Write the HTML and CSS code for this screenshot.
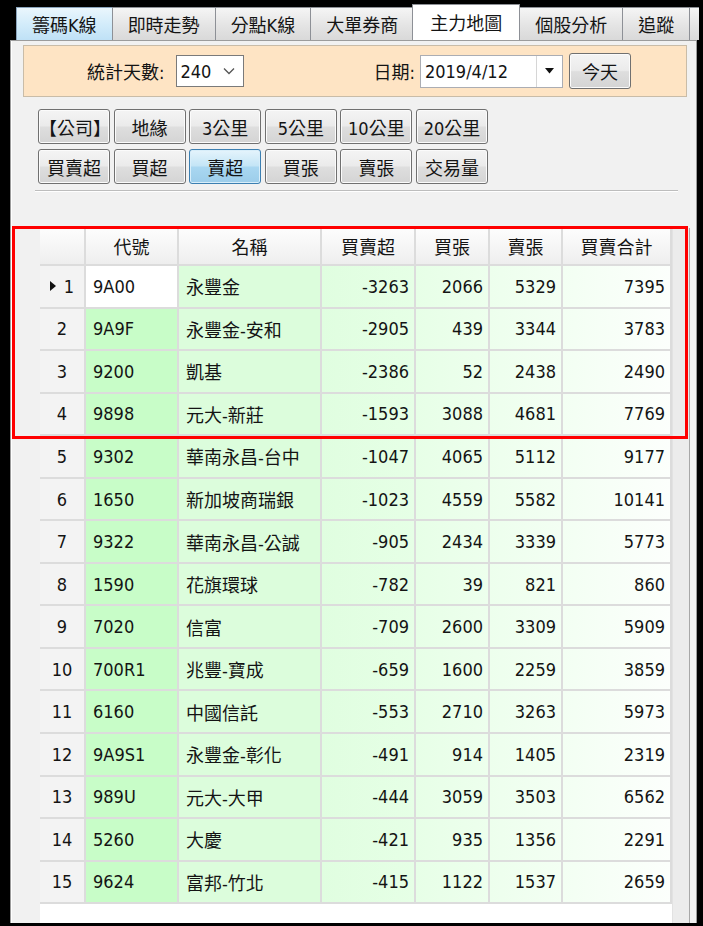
FILE: index.html
```html
<!DOCTYPE html>
<html lang="zh-TW">
<head>
    <meta charset="UTF-8">
    <title>主力地圖</title>
    <link rel="stylesheet" href="styles.css">
</head>
<body>
    <div class="window">
        <div class="tabs">
            <div class="tab tab-hover">籌碼K線</div>
            <div class="tab">即時走勢</div>
            <div class="tab">分點K線</div>
            <div class="tab">大單券商</div>
            <div class="tab tab-active">主力地圖</div>
            <div class="tab">個股分析</div>
            <div class="tab">追蹤</div>
            <div class="tab tab-more"></div>
        </div>

        <div class="panel">
            <div class="filter">
                <span class="label label-days">統計天數:</span>
                <div class="select">
                    <span>240</span>
                    <svg width="12" height="8" viewBox="0 0 12 8"><path d="M1 1.5 L6 6.5 L11 1.5" fill="none" stroke="#555" stroke-width="1.3"/></svg>
                </div>
                <span class="label label-date">日期:</span>
                <div class="datebox">
                    <span class="date-text">2019/4/12</span>
                    <div class="drop">
                        <svg width="9" height="6" viewBox="0 0 9 6"><polygon points="0,0 9,0 4.5,5.5" fill="#111"/></svg>
                    </div>
                </div>
                <button class="btn btn-today">今天</button>
            </div>

            <div class="btn-grid">
                <button class="btn">【公司】</button>
                <button class="btn">地緣</button>
                <button class="btn">3公里</button>
                <button class="btn">5公里</button>
                <button class="btn">10公里</button>
                <button class="btn">20公里</button>
                <button class="btn">買賣超</button>
                <button class="btn">買超</button>
                <button class="btn btn-on">賣超</button>
                <button class="btn">買張</button>
                <button class="btn">賣張</button>
                <button class="btn">交易量</button>
            </div>

            <div class="sep"></div>

            <div class="grid-wrap">
                <div class="grid">
                    <div class="row head">
                        <div class="cell rh"></div>
                        <div class="cell">代號</div>
                        <div class="cell">名稱</div>
                        <div class="cell">買賣超</div>
                        <div class="cell">買張</div>
                        <div class="cell">賣張</div>
                        <div class="cell">買賣合計</div>
                    </div>
                    <div class="row current">
                        <div class="cell rh"><span class="arrow"></span>1</div>
                        <div class="cell code">9A00</div>
                        <div class="cell name">永豐金</div>
                        <div class="cell num c1">-3263</div>
                        <div class="cell num c2">2066</div>
                        <div class="cell num c3">5329</div>
                        <div class="cell num c4">7395</div>
                    </div>
                    <div class="row">
                        <div class="cell rh">2</div>
                        <div class="cell code">9A9F</div>
                        <div class="cell name">永豐金-安和</div>
                        <div class="cell num c1">-2905</div>
                        <div class="cell num c2">439</div>
                        <div class="cell num c3">3344</div>
                        <div class="cell num c4">3783</div>
                    </div>
                    <div class="row">
                        <div class="cell rh">3</div>
                        <div class="cell code">9200</div>
                        <div class="cell name">凱基</div>
                        <div class="cell num c1">-2386</div>
                        <div class="cell num c2">52</div>
                        <div class="cell num c3">2438</div>
                        <div class="cell num c4">2490</div>
                    </div>
                    <div class="row">
                        <div class="cell rh">4</div>
                        <div class="cell code">9898</div>
                        <div class="cell name">元大-新莊</div>
                        <div class="cell num c1">-1593</div>
                        <div class="cell num c2">3088</div>
                        <div class="cell num c3">4681</div>
                        <div class="cell num c4">7769</div>
                    </div>
                    <div class="row">
                        <div class="cell rh">5</div>
                        <div class="cell code">9302</div>
                        <div class="cell name">華南永昌-台中</div>
                        <div class="cell num c1">-1047</div>
                        <div class="cell num c2">4065</div>
                        <div class="cell num c3">5112</div>
                        <div class="cell num c4">9177</div>
                    </div>
                    <div class="row">
                        <div class="cell rh">6</div>
                        <div class="cell code">1650</div>
                        <div class="cell name">新加坡商瑞銀</div>
                        <div class="cell num c1">-1023</div>
                        <div class="cell num c2">4559</div>
                        <div class="cell num c3">5582</div>
                        <div class="cell num c4">10141</div>
                    </div>
                    <div class="row">
                        <div class="cell rh">7</div>
                        <div class="cell code">9322</div>
                        <div class="cell name">華南永昌-公誠</div>
                        <div class="cell num c1">-905</div>
                        <div class="cell num c2">2434</div>
                        <div class="cell num c3">3339</div>
                        <div class="cell num c4">5773</div>
                    </div>
                    <div class="row">
                        <div class="cell rh">8</div>
                        <div class="cell code">1590</div>
                        <div class="cell name">花旗環球</div>
                        <div class="cell num c1">-782</div>
                        <div class="cell num c2">39</div>
                        <div class="cell num c3">821</div>
                        <div class="cell num c4">860</div>
                    </div>
                    <div class="row">
                        <div class="cell rh">9</div>
                        <div class="cell code">7020</div>
                        <div class="cell name">信富</div>
                        <div class="cell num c1">-709</div>
                        <div class="cell num c2">2600</div>
                        <div class="cell num c3">3309</div>
                        <div class="cell num c4">5909</div>
                    </div>
                    <div class="row">
                        <div class="cell rh">10</div>
                        <div class="cell code">700R1</div>
                        <div class="cell name">兆豐-寶成</div>
                        <div class="cell num c1">-659</div>
                        <div class="cell num c2">1600</div>
                        <div class="cell num c3">2259</div>
                        <div class="cell num c4">3859</div>
                    </div>
                    <div class="row">
                        <div class="cell rh">11</div>
                        <div class="cell code">6160</div>
                        <div class="cell name">中國信託</div>
                        <div class="cell num c1">-553</div>
                        <div class="cell num c2">2710</div>
                        <div class="cell num c3">3263</div>
                        <div class="cell num c4">5973</div>
                    </div>
                    <div class="row">
                        <div class="cell rh">12</div>
                        <div class="cell code">9A9S1</div>
                        <div class="cell name">永豐金-彰化</div>
                        <div class="cell num c1">-491</div>
                        <div class="cell num c2">914</div>
                        <div class="cell num c3">1405</div>
                        <div class="cell num c4">2319</div>
                    </div>
                    <div class="row">
                        <div class="cell rh">13</div>
                        <div class="cell code">989U</div>
                        <div class="cell name">元大-大甲</div>
                        <div class="cell num c1">-444</div>
                        <div class="cell num c2">3059</div>
                        <div class="cell num c3">3503</div>
                        <div class="cell num c4">6562</div>
                    </div>
                    <div class="row">
                        <div class="cell rh">14</div>
                        <div class="cell code">5260</div>
                        <div class="cell name">大慶</div>
                        <div class="cell num c1">-421</div>
                        <div class="cell num c2">935</div>
                        <div class="cell num c3">1356</div>
                        <div class="cell num c4">2291</div>
                    </div>
                    <div class="row">
                        <div class="cell rh">15</div>
                        <div class="cell code">9624</div>
                        <div class="cell name">富邦-竹北</div>
                        <div class="cell num c1">-415</div>
                        <div class="cell num c2">1122</div>
                        <div class="cell num c3">1537</div>
                        <div class="cell num c4">2659</div>
                    </div>
                </div>
                <div class="gutter"></div>
            </div>
        </div>

        <!-- 標示框 -->
        <div class="mark"></div>
    </div>
</body>
</html>
```

FILE: styles.css
```css
:root {
    --ui-font: "DejaVu Sans Condensed", "DejaVu Sans", "Noto Sans CJK TC", sans-serif;
    --line: #dcdcdc;
    --text: #141414;
}

* {
    margin: 0;
    padding: 0;
    box-sizing: border-box;
}

body {
    background: #000;
    width: 703px;
    height: 926px;
    overflow: hidden;
    font-family: var(--ui-font);
    font-size: 18px;
    color: var(--text);
}

.window {
    position: relative;
    width: 699px;
    height: 923px;
    padding-top: 4px;
    overflow: hidden;
    display: flex;
    flex-direction: column;
}

/* 分頁 */
.tabs {
    display: flex;
    align-items: flex-end;
    height: 36px;
    margin-left: 16px;
    overflow: hidden;
}

.tab {
    flex: none;
    height: 33px;
    padding: 0 15px;
    margin-right: -1px;
    display: flex;
    align-items: center;
    justify-content: center;
    border: 1px solid #8d9096;
    border-bottom: none;
    background: linear-gradient(#f5f5f5, #e4e4e4 55%, #d9d9d9);
    white-space: nowrap;
}

.tab-hover {
    border-color: #8aa4bc;
    background: linear-gradient(#eaf6fd, #d3ecfa 50%, #bfe1f6);
}

.tab-active {
    position: relative;
    z-index: 1;
    height: 37px;
    margin: 0 -1px -1px -1px;
    padding: 0 17px 3px;
    background: #fff;
    border-color: #8d9096;
}

.tab-more {
    width: 60px;
}

/* 主面板 */
.panel {
    flex: 1;
    margin-left: 10px;
    width: 687px;
    border: 1px solid #9c9c9c;
    border-bottom: none;
    background: #f1f1f1;
    box-shadow: inset 1px 0 #fff;
    padding-top: 4px;
    display: flex;
    flex-direction: column;
}

.filter {
    margin-left: 12px;
    width: 664px;
    height: 52px;
    flex: none;
    background: #fee4c4;
    border: 1px solid #c9bca8;
    display: flex;
    align-items: center;
    padding-left: 63px;
}

.label {
    white-space: nowrap;
}

.select {
    margin-left: 12px;
    width: 68px;
    height: 32px;
    background: #fff;
    border: 1px solid #7a7a7a;
    display: flex;
    align-items: center;
    justify-content: space-between;
    padding: 0 8px 0 3px;
}

.label-date {
    margin-left: 129px;
}

.datebox {
    margin-left: 5px;
    width: 143px;
    height: 33px;
    background: #fff;
    border: 1px solid #abadb3;
    display: flex;
    align-items: center;
}

.date-text {
    flex: 1;
    padding-left: 4px;
}

.drop {
    width: 26px;
    height: 100%;
    border-left: 1px solid #d6d6d6;
    display: flex;
    align-items: center;
    justify-content: center;
}

/* 按鈕 */
.btn {
    font-family: var(--ui-font);
    font-size: 18px;
    color: var(--text);
    height: 35px;
    border: 1px solid #707070;
    border-radius: 3px;
    background: linear-gradient(#f4f4f4, #ebebeb 48%, #dedede 52%, #d4d4d4);
    box-shadow: inset 0 0 0 1px #fbfbfb;
    white-space: nowrap;
}

.btn-on {
    border-color: #3c7fb1;
    background: linear-gradient(#e5f4fc, #c4e5f6 48%, #a9d7f1 52%, #9ccdea);
    box-shadow: inset 0 0 0 1px #d8eefa;
}

.btn-today {
    margin-left: 6px;
    width: 62px;
    height: 36px;
}

.btn-grid {
    margin: 12px 0 0 27px;
    display: grid;
    grid-template-columns: repeat(6, 72px);
    column-gap: 3.6px;
    row-gap: 5px;
    flex: none;
}

.sep {
    margin: 6px 0 0 24px;
    width: 643px;
    height: 2px;
    background: #bdbdbd;
    border-bottom: 1px solid #fff;
    flex: none;
}

/* 表格 */
.grid-wrap {
    flex: 1;
    margin: 36px 0 0 29px;
    width: 650px;
    display: flex;
    background: #fff;
}

.grid {
    width: 632px;
}

.row {
    display: grid;
    grid-template-columns: 46px 93px 143px 94px 74px 73px 109px;
    height: 42.55px;
}

.row.head {
    height: 38px;
}

.cell {
    display: flex;
    align-items: center;
    border-right: 2px solid var(--line);
    border-bottom: 2px solid var(--line);
    white-space: nowrap;
    overflow: hidden;
}

.head .cell {
    justify-content: center;
    background: linear-gradient(#fdfdfd, #f6f6f6 50%, #eeeeee);
}

.rh {
    justify-content: center;
    background: #f3f3f3;
}

.arrow {
    width: 0;
    height: 0;
    border-top: 5px solid transparent;
    border-bottom: 5px solid transparent;
    border-left: 6px solid #111;
    margin-right: 8px;
}

.code {
    padding-left: 7px;
    background: #c8fdc8;
}

.current .code {
    background: #fff;
}

.name {
    padding-left: 7px;
    background: #dcfddc;
}

.num {
    justify-content: flex-end;
    padding-right: 5px;
}

.c1 { background: linear-gradient(90deg, #e0fee0, #e6ffe6); }
.c2 { background: linear-gradient(90deg, #e7ffe7, #edffed); }
.c3 { background: linear-gradient(90deg, #edffed, #f3fff3); }
.c4 { background: linear-gradient(90deg, #f3fff3, #fcfffc); }

.gutter {
    width: 18px;
    background: #ececec;
    border-left: 1px solid #e2e2e2;
    border-right: 1px solid #a8a8a8;
}

/* 紅色標示框 */
.mark {
    position: absolute;
    left: 12px;
    top: 226px;
    width: 676px;
    height: 213px;
    border: 3px solid #ff0000;
    pointer-events: none;
}
```
